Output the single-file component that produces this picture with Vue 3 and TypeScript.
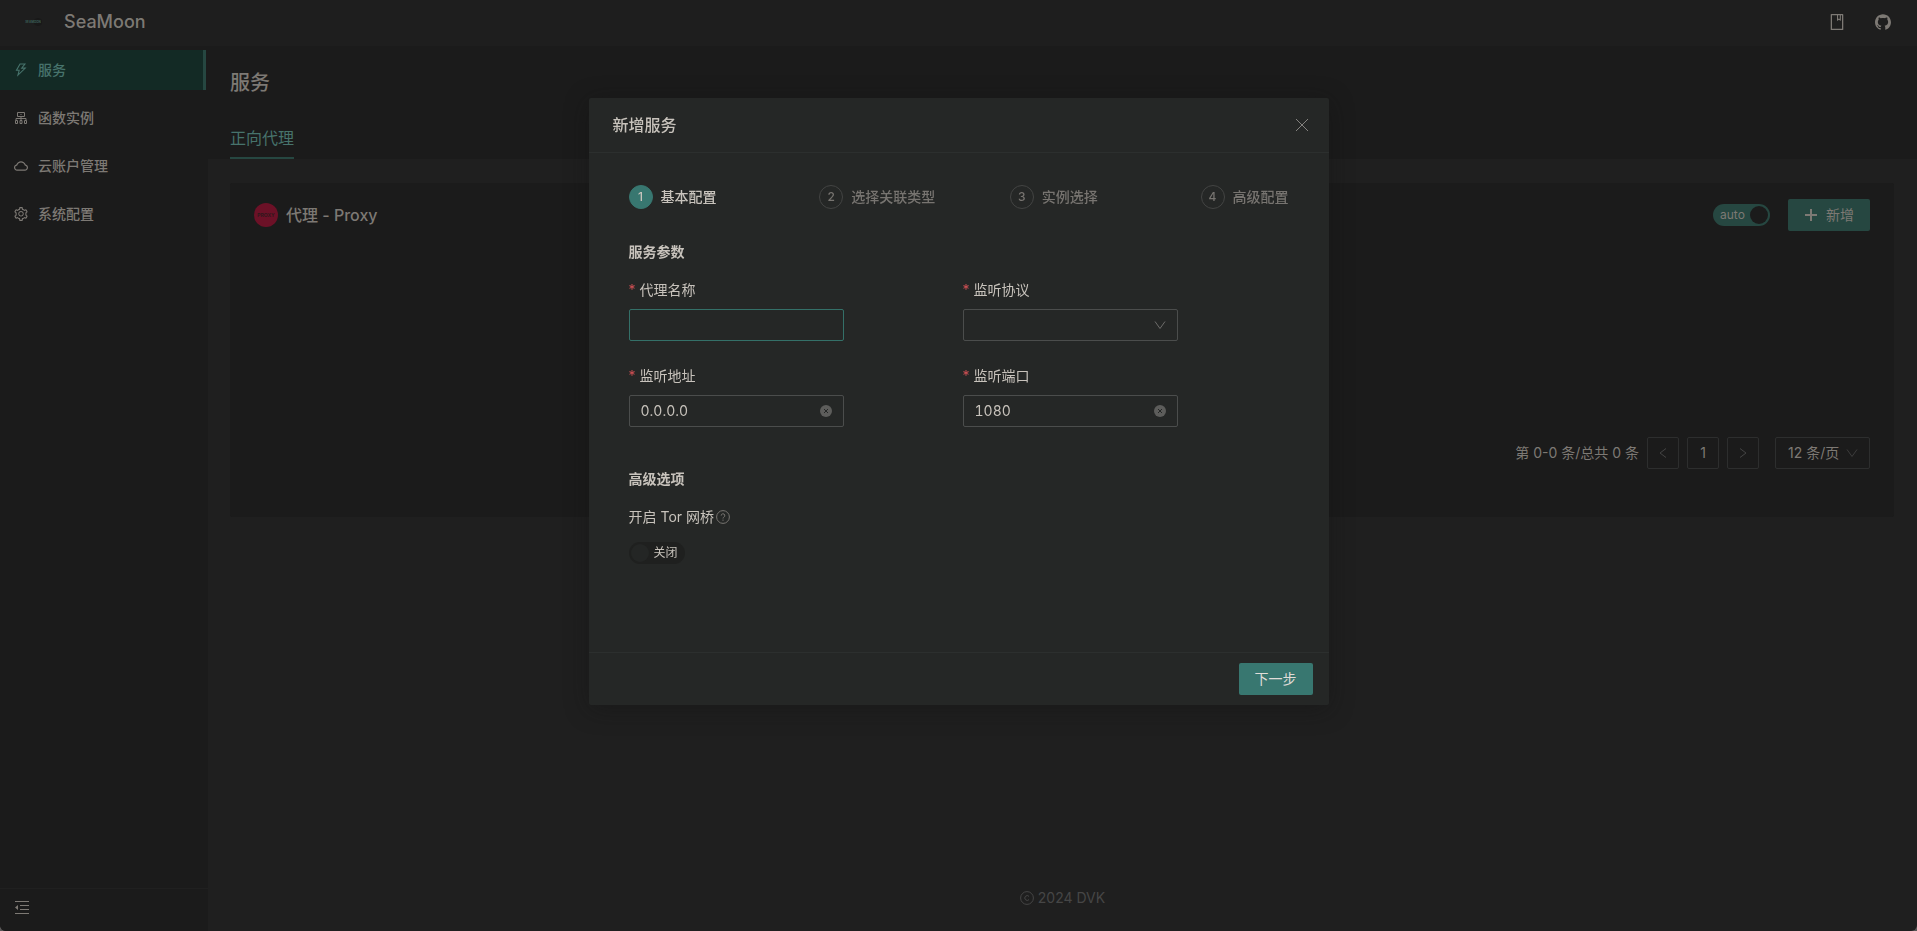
<script setup lang="ts">
import { ref } from 'vue'

interface MenuItem {
  key: string
  label: string
}

const menu: MenuItem[] = [
  { key: 'service', label: '服务' },
  { key: 'function', label: '函数实例' },
  { key: 'cloud', label: '云账户管理' },
  { key: 'setting', label: '系统配置' },
]
const activeMenu = ref('service')

const steps = ['基本配置', '选择关联类型', '实例选择', '高级配置']
const currentStep = ref(0)

const proxyName = ref('')
const protocol = ref('')
const address = ref('0.0.0.0')
const port = ref('1080')
const tor = ref(false)
const auto = ref(true)
const pageSize = ref('12')
</script>

<template>
  <div class="app">
    <header class="topbar">
      <a class="brand" href="#">
        <svg class="brand-logo" viewBox="0 0 28 28" aria-hidden="true">
          <circle cx="18" cy="14" r="4" fill="#191919" />
          <text x="13" y="15" text-anchor="middle">SEAMOON</text>
        </svg>
        <span>SeaMoon</span>
      </a>
      <nav class="top-actions">
        <a href="#" aria-label="文档">
          <svg class="icon-16" viewBox="64 64 896 896"><path d="M832 64H192c-17.700 0-32 14.300-32 32v832c0 17.700 14.300 32 32 32h640c17.700 0 32-14.300 32-32V96c0-17.700-14.300-32-32-32zm-260 72h96v209.900L621.500 312 572 347.400V136zm220 752H232V136h280v296.900c0 3.300 1 6.600 3 9.300a15.900 15.900 0 0 0 22.300 3.700l83.800-59.900 81.400 59.400c2.700 2 6 3.100 9.400 3.100 8.800 0 16-7.200 16-16V136h64v752z" /></svg>
        </a>
        <a href="#" aria-label="GitHub">
          <svg class="icon-16" viewBox="64 64 896 896"><path d="M511.600 76.300C264.300 76.200 64 276.400 64 523.500 64 718.900 189.300 885 363.800 946c23.500 5.900 19.900-10.800 19.900-22.200v-77.500c-135.700 15.900-141.200-73.900-150.300-88.900C215 726 171.500 718 184.500 703c30.900-15.900 62.400 4 98.900 57.900 26.400 39.100 77.900 32.500 104 26 5.700-23.500 17.900-44.500 34.700-60.800-140.600-25.200-199.200-111-199.200-213 0-49.500 16.300-95 48.300-131.700-20.400-60.500 1.900-112.300 4.900-120 58.100-5.200 118.500 41.600 123.200 45.300 33-8.900 70.700-13.600 112.900-13.600 42.400 0 80.200 4.900 113.500 13.900 11.300-8.600 67.300-48.800 121.300-43.900 2.900 7.700 24.700 58.300 5.500 118 32.400 36.800 48.900 82.700 48.900 132.300 0 102.200-59 188.100-200 212.900a127.500 127.500 0 0 1 38.100 91v112.500c.8 9 0 17.900 15 17.900 177.100-59.700 304.600-227 304.600-424.100 0-247.200-200.400-447.300-447.500-447.300z" /></svg>
        </a>
      </nav>
    </header>

    <div class="shell">
      <aside class="sidebar">
        <ul class="menu">
          <li v-for="item in menu" :key="item.key">
            <a href="#" class="menu-item" :class="{ active: item.key === activeMenu }" @click.prevent="activeMenu = item.key">
              <svg v-if="item.key === 'service'" class="icon-14" viewBox="64 64 896 896"><path d="M848 359.300H627.700L825.800 109c4.100-5.300.4-13-6.300-13H436c-2.800 0-5.500 1.500-6.900 4L170 547.500c-3.100 5.300.7 12 6.900 12h174.400l-89.400 357.600c-1.900 7.800 7.500 13.300 13.300 7.700L853.500 373c5.200-4.900 1.700-13.700-5.500-13.700zM378.200 732.500l60.300-241H281.100l189.600-327.400h224.600L487 427.400h211L378.200 732.500z" /></svg>
              <svg v-else-if="item.key === 'function'" class="icon-14 outline" viewBox="0 0 14 14"><path d="M3.500 1.500h7v4h-7zM6.500 3.500h1M7 5.500v4M2 9.500v-2h10v2M1.500 9.500h2v3h-2zM6 9.500h2v3H6zM10.500 9.500h2v3h-2z" /></svg>
              <svg v-else-if="item.key === 'cloud'" class="icon-14" viewBox="64 64 896 896"><path d="M811.400 418.700C765.600 297.900 648.900 212 512.200 212S258.800 297.800 213 418.600C127.300 441.100 64 519.100 64 612c0 110.500 89.500 200 199.900 200h496.200C870.500 812 960 722.500 960 612c0-92.700-63.100-170.700-148.600-193.300zm36.300 281a123.070 123.070 0 0 1-87.600 36.300H263.900c-33.100 0-64.200-12.900-87.600-36.300A123.300 123.300 0 0 1 140 612c0-28 9.100-54.300 26.200-76.300a125.700 125.700 0 0 1 66.100-43.700l37.900-9.900 13.900-36.600c8.600-22.800 20.600-44.100 35.700-63.400a245.600 245.600 0 0 1 52.400-49.900c41.100-28.900 89.500-44.200 140-44.200s98.900 15.300 140 44.200c19.900 14 37.500 30.800 52.400 49.900 15.100 19.300 27.100 40.700 35.700 63.400l13.800 36.500 37.800 10c54.300 14.500 92.100 63.800 92.100 120 0 33.100-12.900 64.300-36.300 87.700z" /></svg>
              <svg v-else class="icon-14" viewBox="64 64 896 896"><path d="M924.800 625.700l-65.500-56c3.100-19 4.700-38.400 4.700-57.800s-1.600-38.800-4.700-57.800l65.500-56a32.030 32.030 0 0 0 9.300-35.200l-.9-2.600a443.740 443.740 0 0 0-79.700-137.900l-1.800-2.100a32.120 32.120 0 0 0-35.100-9.500l-81.300 28.900c-30-24.600-63.500-44-99.700-57.600l-15.700-85a32.050 32.050 0 0 0-25.800-25.700l-2.700-.5c-52.100-9.400-106.900-9.400-159 0l-2.700.5a32.050 32.050 0 0 0-25.800 25.700l-15.800 85.400a351.860 351.860 0 0 0-99 57.400l-81.900-29.100a32 32 0 0 0-35.100 9.500l-1.800 2.100a446.020 446.020 0 0 0-79.700 137.900l-.9 2.600c-4.500 12.500-.8 26.500 9.300 35.200l66.300 56.600c-3.100 18.800-4.600 38-4.600 57.100 0 19.200 1.500 38.400 4.600 57.100L99 625.500a32.030 32.030 0 0 0-9.300 35.200l.9 2.600c18.100 50.400 44.900 96.900 79.700 137.900l1.800 2.100a32.120 32.120 0 0 0 35.100 9.500l81.900-29.100c29.800 24.500 63.100 43.900 99 57.400l15.800 85.400a32.050 32.050 0 0 0 25.800 25.700l2.700.5a449.400 449.400 0 0 0 159 0l2.700-.5a32.050 32.050 0 0 0 25.800-25.700l15.700-85a350 350 0 0 0 99.700-57.600l81.300 28.900a32 32 0 0 0 35.100-9.500l1.800-2.100c34.800-41.100 61.600-87.500 79.700-137.900l.9-2.600c4.500-12.300.8-26.300-9.300-35zM788.300 465.900c2.500 15.100 3.800 30.600 3.800 46.100s-1.300 31-3.800 46.100l-6.600 40.100 74.700 63.900a370.030 370.030 0 0 1-42.600 73.600L721 702.800l-31.400 25.800c-23.900 19.600-50.500 35-79.300 45.800l-38.100 14.300-17.900 97a377.500 377.500 0 0 1-85 0l-17.900-97.200-37.800-14.500c-28.500-10.800-55-26.200-78.700-45.700l-31.400-25.900-93.400 33.200c-17-22.900-31.200-47.600-42.600-73.600l75.500-64.500-6.500-40c-2.400-14.900-3.700-30.300-3.700-45.500 0-15.300 1.200-30.600 3.700-45.500l6.500-40-75.500-64.500c11.300-26.100 25.600-50.700 42.600-73.600l93.400 33.200 31.400-25.900c23.700-19.500 50.200-34.900 78.700-45.700l37.900-14.300 17.900-97.200c28.100-3.200 56.800-3.200 85 0l17.900 97 38.100 14.300c28.700 10.800 55.400 26.200 79.300 45.800l31.400 25.800 92.800-32.900c17 22.900 31.200 47.600 42.600 73.600L781.800 426l6.500 39.900zM512 326c-97.200 0-176 78.800-176 176s78.800 176 176 176 176-78.800 176-176-78.800-176-176-176zm79.200 255.200A111.600 111.600 0 0 1 512 614c-29.900 0-58-11.700-79.200-32.800A111.600 111.600 0 0 1 400 502c0-29.900 11.700-58 32.800-79.200C454 401.600 482.100 390 512 390s58 11.600 79.200 32.800A111.600 111.600 0 0 1 624 502c0 29.900-11.700 58-32.800 79.200z" /></svg>
              <span>{{ item.label }}</span>
            </a>
          </li>
        </ul>
        <button class="collapse" type="button" aria-label="收起菜单">
          <svg class="icon-16" viewBox="0 0 16 16"><path d="M1 1h14v1H1zM6 5h9v1H6zM6 9h9v1H6zM1 13h14v1H1zM4 5v5L1 7.500z" /></svg>
        </button>
      </aside>

      <main class="main">
        <div class="page-head">
          <h1>服务</h1>
          <div class="tabs" role="tablist">
            <button type="button" class="tab" role="tab" aria-selected="true">正向代理</button>
          </div>
        </div>

        <section class="card">
          <div class="card-head">
            <svg class="avatar" viewBox="0 0 24 24" aria-hidden="true">
              <circle cx="12" cy="12" r="12" fill="#6c1127" />
              <text x="12" y="14" text-anchor="middle">PROXY</text>
            </svg>
            <h2>代理 - Proxy</h2>
            <label class="switch on">
              <input v-model="auto" type="checkbox" />
              <span>auto</span>
              <i class="knob"></i>
            </label>
            <button type="button" class="btn-add">
              <svg class="icon-14" viewBox="0 0 14 14"><path d="M6 1h2v12H6zM1 6h12v2H1z" /></svg>
              <span>新增</span>
            </button>
          </div>
          <div class="pagination">
            <span>第 0-0 条/总共 0 条</span>
            <button type="button" class="page-btn" disabled aria-label="上一页">
              <svg class="icon-12 outline" viewBox="0 0 12 12"><path d="M9 1.500L3 6l6 4.500" /></svg>
            </button>
            <button type="button" class="page-btn current">1</button>
            <button type="button" class="page-btn" disabled aria-label="下一页">
              <svg class="icon-12 outline" viewBox="0 0 12 12"><path d="M3 1.500L9 6l-6 4.500" /></svg>
            </button>
            <div class="select page-size">
              <select v-model="pageSize" aria-label="每页条数">
                <option value="12">12 条/页</option>
                <option value="24">24 条/页</option>
              </select>
              <svg class="icon-12 outline" viewBox="0 0 12 12"><path d="M1 2.500l5 7 5-7" /></svg>
            </div>
          </div>
        </section>

        <footer class="page-foot">
          <svg class="icon-14 outline" viewBox="0 0 14 14"><circle cx="7" cy="7" r="6.400" /><path d="M9 5.400A2.400 2.400 0 1 0 9 8.600" /></svg>
          <span>2024 DVK</span>
        </footer>
      </main>
    </div>

    <div class="overlay">
      <section class="modal" role="dialog" aria-modal="true" aria-labelledby="modal-title">
        <header class="modal-head">
          <h2 id="modal-title">新增服务</h2>
          <button type="button" class="close" aria-label="关闭">
            <svg class="icon-14 outline" viewBox="0 0 14 14"><path d="M1 1l12 12M13 1L1 13" /></svg>
          </button>
        </header>

        <form class="modal-body" @submit.prevent>
          <ol class="steps">
            <li v-for="(step, i) in steps" :key="step" :class="{ current: i === currentStep }">
              <span class="step-no">{{ i + 1 }}</span>
              <span>{{ step }}</span>
            </li>
          </ol>

          <h3>服务参数</h3>
          <div class="fields">
            <div class="field">
              <label for="name"><b>*</b>代理名称</label>
              <div class="box focused"><input id="name" v-model="proxyName" type="text" /></div>
            </div>
            <div class="field">
              <label for="protocol"><b>*</b>监听协议</label>
              <div class="box select">
                <select id="protocol" v-model="protocol">
                  <option value=""></option>
                  <option value="http">http</option>
                  <option value="socks5">socks5</option>
                </select>
                <svg class="icon-12 outline" viewBox="0 0 12 12"><path d="M1 2.500l5 7 5-7" /></svg>
              </div>
            </div>
            <div class="field">
              <label for="address"><b>*</b>监听地址</label>
              <div class="box">
                <input id="address" v-model="address" type="text" />
                <button type="button" class="clear" aria-label="清除地址" @click="address = ''">
                  <svg class="icon-12" viewBox="0 0 12 12"><circle cx="6" cy="6" r="6" /><path class="cross" d="M4 4l4 4M8 4L4 8" /></svg>
                </button>
              </div>
            </div>
            <div class="field">
              <label for="port"><b>*</b>监听端口</label>
              <div class="box">
                <input id="port" v-model="port" type="text" />
                <button type="button" class="clear" aria-label="清除端口" @click="port = ''">
                  <svg class="icon-12" viewBox="0 0 12 12"><circle cx="6" cy="6" r="6" /><path class="cross" d="M4 4l4 4M8 4L4 8" /></svg>
                </button>
              </div>
            </div>
          </div>

          <h3>高级选项</h3>
          <div class="field tor-field">
            <label for="tor">开启 Tor 网桥
              <svg class="icon-14 outline help" viewBox="0 0 14 14"><circle cx="7" cy="7" r="6.400" /><path d="M5.200 5.600a1.800 1.800 0 1 1 2.600 1.600q-.8.400-.8 1.300M7 9.600v1.200" /></svg>
            </label>
            <label class="switch off">
              <input id="tor" v-model="tor" type="checkbox" />
              <i class="knob"></i>
              <span>关闭</span>
            </label>
          </div>
        </form>

        <footer class="modal-foot">
          <button type="button" class="btn-next">下一步</button>
        </footer>
      </section>
    </div>
  </div>
</template>

<style>
body {
  margin: 0;
  background: #5a5858;
}
</style>

<style scoped>
.app {
  min-height: 100vh;
  display: flex;
  flex-direction: column;
  overflow: hidden;
  border-radius: 0 0 6px 6px;
  background: #1f1f1f;
  color: #7d7974;
  font-family: Inter, "Noto Sans CJK SC", sans-serif;
  font-size: 14px;
  line-height: 22px;
}
.app,
.app *,
.app *::before {
  box-sizing: border-box;
}
h1, h2, h3, ul, ol {
  margin: 0;
  padding: 0;
  font-weight: 500;
  list-style: none;
}
a {
  color: inherit;
  text-decoration: none;
}
button, input, select {
  margin: 0;
  padding: 0;
  border: 0;
  background: none;
  color: inherit;
  font: inherit;
  outline: 0;
}
svg {
  display: block;
  flex: none;
  fill: currentColor;
}
.icon-12 { width: 12px; height: 12px; }
.icon-14 { width: 14px; height: 14px; }
.icon-16 { width: 16px; height: 16px; }
.outline {
  fill: none;
  stroke: currentColor;
}

.topbar {
  height: 46px;
  padding: 0 26px 2px 20px;
  display: flex;
  align-items: center;
  justify-content: space-between;
  background: #1e1e1e;
}
.brand {
  display: flex;
  align-items: center;
  gap: 16px;
  font-size: 18px;
  font-weight: 500;
}
.brand-logo {
  width: 28px;
  height: 28px;
}
.brand-logo text {
  fill: #3b5d56;
  font-size: 3px;
  font-weight: 700;
}
.top-actions {
  display: flex;
  gap: 30px;
}

.shell {
  flex: 1;
  display: flex;
}
.sidebar {
  width: 208px;
  flex: none;
  padding-top: 4px;
  display: flex;
  flex-direction: column;
  background: #1b1b1b;
}
.menu {
  flex: 1;
  display: flex;
  flex-direction: column;
  gap: 8px;
}
.menu-item {
  height: 40px;
  margin-right: 2px;
  padding-left: 14px;
  display: flex;
  align-items: center;
  gap: 10px;
}
.menu-item.active {
  background: #132a25;
  border-right: 3px solid #264741;
  color: #47736c;
}
.collapse {
  height: 43px;
  padding: 0 0 4px 14px;
  border-top: 1px solid #202020;
  text-align: left;
}

.main {
  flex: 1;
  min-width: 0;
  display: flex;
  flex-direction: column;
}
.page-head {
  padding: 20px 22px 0;
  background: #1b1b1b;
}
.page-head h1 {
  font-size: 20px;
  line-height: 34px;
}
.tabs {
  padding-top: 16px;
  display: flex;
}
.tab {
  height: 43px;
  padding-top: 2px;
  border-bottom: 2px solid #264741;
  color: #47736c;
  font-size: 16px;
}
.card {
  margin: 24px 23px 0 22px;
  padding: 16px 24px 48px;
  border-radius: 2px;
  background: #1b1b1b;
}
.card-head {
  display: flex;
  align-items: center;
}
.avatar {
  width: 24px;
  height: 24px;
  margin-right: 8px;
}
.avatar text {
  fill: #2f181c;
  font-size: 5px;
  font-weight: 700;
}
.card-head h2 {
  margin-right: auto;
  font-size: 16px;
}
.switch {
  position: relative;
  height: 22px;
  display: inline-flex;
  align-items: center;
  gap: 5px;
  border-radius: 11px;
  font-size: 12px;
}
.switch input {
  position: absolute;
  inset: 0;
  opacity: 0;
}
.knob {
  width: 18px;
  height: 18px;
  border-radius: 50%;
}
.switch.on {
  width: 57px;
  justify-content: space-between;
  padding: 0 2px 0 7px;
  background: #264741;
}
.switch.on .knob {
  background: #1b1b1b;
}
.switch.off {
  padding: 0 7px 0 2px;
  background: #1f201f;
}
.switch.off .knob {
  background: #242625;
}
.btn-add {
  height: 32px;
  margin-left: 18px;
  padding: 0 16px;
  display: flex;
  align-items: center;
  gap: 8px;
  border-radius: 2px;
  background: #264741;
}
.pagination {
  margin-top: 206px;
  display: flex;
  align-items: center;
  justify-content: flex-end;
  gap: 8px;
}
.page-btn {
  width: 32px;
  height: 32px;
  display: flex;
  align-items: center;
  justify-content: center;
  border: 1px solid #2d2e2e;
  border-radius: 2px;
  color: #444;
}
.page-btn.current {
  color: #7d7974;
}
.select {
  position: relative;
}
.select select {
  width: 100%;
  height: 100%;
  padding: 0 12px;
  appearance: none;
}
.select svg {
  position: absolute;
  top: 9px;
  right: 11px;
  pointer-events: none;
}
.page-size {
  width: 95px;
  height: 32px;
  margin-left: 8px;
  border: 1px solid #2d2e2e;
  border-radius: 2px;
}
.page-size svg {
  color: #3c3c3c;
}
.page-foot {
  margin-top: auto;
  padding-bottom: 22px;
  display: flex;
  align-items: center;
  justify-content: center;
  gap: 4px;
  color: #464646;
}

.overlay {
  position: fixed;
  inset: 0;
  padding: 98px 16px 0;
  display: flex;
  align-items: flex-start;
  justify-content: center;
}
.modal {
  width: 740px;
  border-radius: 2px;
  background: #252726;
  box-shadow: 0 4px 24px rgba(18, 18, 18, 0.4);
  color: #c8c3bc;
}
.modal-head {
  padding: 16px 20px 16px 24px;
  display: flex;
  align-items: center;
  justify-content: space-between;
  border-bottom: 1px solid #2c2f2e;
}
.modal-head h2 {
  font-size: 16px;
}
.close {
  color: #84827f;
}
.modal-body {
  padding: 32px 40px 88px;
}
.steps {
  display: flex;
}
.steps li {
  flex: 1;
  display: flex;
  align-items: center;
  gap: 8px;
  color: #777470;
}
.steps li:last-child {
  flex: none;
}
.steps li.current {
  color: #c8c3bc;
}
.step-no {
  width: 24px;
  height: 24px;
  display: flex;
  align-items: center;
  justify-content: center;
  border: 1px solid #434443;
  border-radius: 50%;
  font-size: 12px;
}
.current .step-no {
  border-color: #387770;
  background: #387770;
}
h3 {
  margin-top: 32px;
  font-size: 14px;
  font-weight: 700;
}
.fields {
  display: grid;
  grid-template-columns: 1fr 1fr;
  column-gap: 8px;
  row-gap: 24px;
  padding: 16px 0 9px;
}
.tor-field {
  padding-top: 16px;
}
.field > label {
  display: flex;
  align-items: center;
  gap: 4px;
}
.tor-field > label {
  gap: 2px;
}
.field b {
  color: #d25054;
  font-weight: 400;
}
.box {
  width: 66%;
  height: 32px;
  margin-top: 8px;
  display: flex;
  align-items: center;
  border: 1px solid #4b4d4c;
  border-radius: 2px;
}
.box.focused {
  border-color: #347068;
}
.box input {
  flex: 1;
  min-width: 0;
  padding-left: 11px;
  font-variant-numeric: tabular-nums;
}
.box.select svg {
  color: #6d6c6a;
}
.clear {
  margin-right: 11px;
  color: #5d5d5b;
}
.cross {
  fill: none;
  stroke: #252726;
}
.help {
  color: #777470;
}
.field > .switch.off {
  width: 56px;
  margin-top: 14px;
  gap: 5px;
}
.modal-foot {
  padding: 10px 16px;
  display: flex;
  justify-content: flex-end;
  border-top: 1px solid #2c2f2e;
}
.btn-next {
  height: 32px;
  padding: 0 16px;
  border-radius: 2px;
  background: #387770;
  color: #e0ddd8;
}
</style>
